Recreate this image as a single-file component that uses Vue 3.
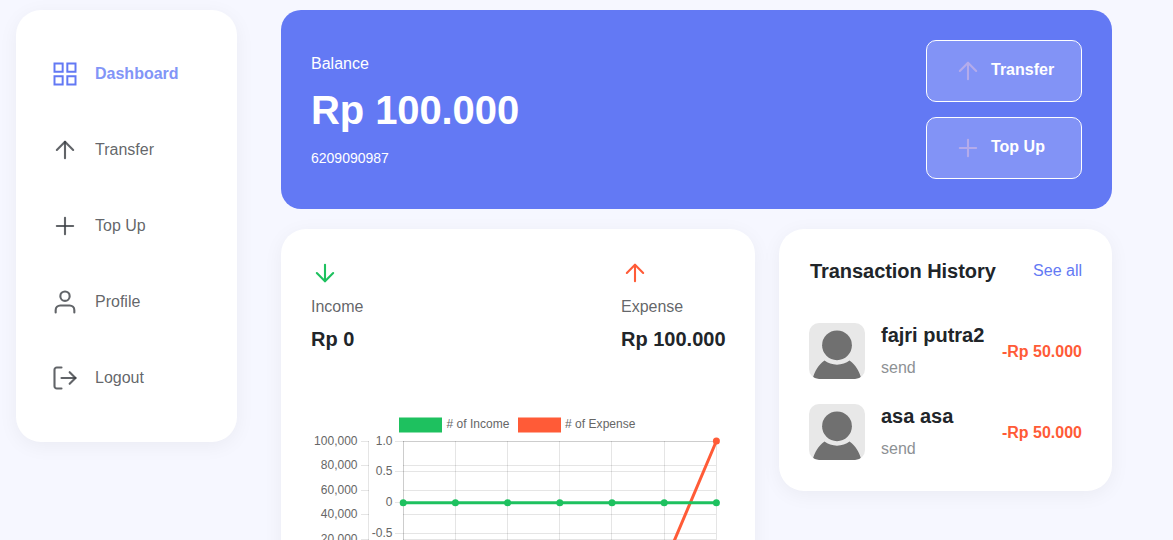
<script setup>
const icons = {
  grid: ['M3 3h7v7H3z', 'M14 3h7v7h-7z', 'M14 14h7v7h-7z', 'M3 14h7v7H3z'],
  up: ['M12 19V5', 'M5 12l7-7 7 7'],
  down: ['M12 5v14', 'M19 12l-7 7-7-7'],
  plus: ['M12 5v14', 'M5 12h14'],
  user: ['M20 21v-2a4 4 0 0 0-4-4H8a4 4 0 0 0-4 4v2', 'M12 3a4 4 0 1 0 0 8a4 4 0 1 0 0-8z'],
  logout: ['M9 21H5a2 2 0 0 1-2-2V5a2 2 0 0 1 2-2h4', 'M16 17l5-5-5-5', 'M21 12H9'],
}
const nav = [
  { label: 'Dashboard', icon: 'grid', active: true },
  { label: 'Transfer', icon: 'up' },
  { label: 'Top Up', icon: 'plus' },
  { label: 'Profile', icon: 'user' },
  { label: 'Logout', icon: 'logout' },
]
const actions = [
  { label: 'Transfer', icon: 'up' },
  { label: 'Top Up', icon: 'plus' },
]
const totals = [
  { label: 'Income', value: 'Rp 0', icon: 'down', tone: 'green' },
  { label: 'Expense', value: 'Rp 100.000', icon: 'up', tone: 'red' },
]
const history = ['fajri putra2', 'asa asa']

// Chart geometry, in the svg's own coordinates
const columns = [92.5, 144.5, 196.5, 248.5, 300.5, 353.5, 405.5]
const points = [92.2, 144.4, 196.6, 248.8, 301, 353.2, 405.4]
const outer = [
  { y: 31.5, t: '100,000' },
  { y: 55.5, t: '80,000' },
  { y: 80.5, t: '60,000' },
  { y: 104.5, t: '40,000' },
  { y: 129.5, t: '20,000' },
]
const inner = [
  { y: 31.5, t: '1.0' },
  { y: 61.5, t: '0.5' },
  { y: 92.5, t: '0' },
  { y: 123.5, t: '-0.5' },
]
</script>

<template>
  <div class="page">
    <aside class="card sidebar">
      <a v-for="n in nav" :key="n.label" class="nav" :class="{ active: n.active }">
        <svg class="icon" viewBox="0 0 24 24"><path v-for="d in icons[n.icon]" :key="d" :d="d" /></svg>
        <span>{{ n.label }}</span>
      </a>
    </aside>
    <main class="main">
      <section class="balance">
        <div class="info">
          <p class="caption">Balance</p>
          <h1>Rp 100.000</h1>
          <p class="phone">6209090987</p>
        </div>
        <div class="actions">
          <button v-for="a in actions" :key="a.label" class="action">
            <svg class="icon" viewBox="0 0 24 24"><path v-for="d in icons[a.icon]" :key="d" :d="d" /></svg>
            <span>{{ a.label }}</span>
          </button>
        </div>
      </section>
      <div class="row">
        <section class="card stats">
          <div class="totals">
            <div v-for="t in totals" :key="t.label">
              <svg class="icon" :class="t.tone" viewBox="0 0 24 24"><path v-for="d in icons[t.icon]" :key="d" :d="d" /></svg>
              <p class="label">{{ t.label }}</p>
              <p class="value">{{ t.value }}</p>
            </div>
          </div>
          <svg class="chart" width="414" height="207" viewBox="0 0 414 207">
            <rect class="key-green" x="88" y="7.5" width="43" height="15" />
            <text x="135.5" y="18" textLength="63">#&#160;of Income</text>
            <rect class="key-red" x="207" y="7.5" width="43" height="15" />
            <text x="254" y="18" textLength="70.5">#&#160;of Expense</text>
            <g class="grid">
              <path v-for="o in outer" :key="o.t" :d="`M50 ${o.y}H58M92 ${o.y}H405`" />
              <path d="M57.5 31V153" />
              <path v-for="i in inner" :key="i.t" :d="`M84 ${i.y}H405`" />
              <path v-for="c in columns" :key="c" :d="`M${c} 31V162`" />
              <path d="M92.5 31V153" />
            </g>
            <g class="ticks">
              <text v-for="o in outer" :key="o.t" x="46.5" :y="o.y + 3">{{ o.t }}</text>
              <text v-for="i in inner" :key="i.t" x="81.5" :y="i.y + 3">{{ i.t }}</text>
            </g>
            <path class="red line" d="M92.2 154.5H353.2L405.4 31" />
            <circle class="dot-red" cx="405.4" cy="31" r="3.5" />
            <path class="green line" d="M92.2 92.7H405.4" />
            <circle v-for="p in points" :key="p" class="dot-green" :cx="p" cy="92.7" r="3.5" />
          </svg>
        </section>
        <section class="card history">
          <header>
            <h2>Transaction History</h2>
            <a>See all</a>
          </header>
          <div v-for="h in history" :key="h" class="entry">
            <svg class="avatar" viewBox="0 0 56 56">
              <rect width="56" height="56" fill="#e8e8e8" />
              <circle cx="28" cy="22.3" r="14.9" />
              <path d="M3.5 56C6 48 9 42 15.5 37.5C22 43 34 43 40.5 37.5C47 42 50 48 52.5 56Z" />
            </svg>
            <div class="who">
              <strong>{{ h }}</strong>
              <span>send</span>
            </div>
            <b class="amount">-Rp 50.000</b>
          </div>
        </section>
      </div>
    </main>
  </div>
</template>

<style>
body {
  margin: 0;
  overflow: hidden;
  background: #f6f7ff;
}
</style>

<style scoped>
.page {
  display: flex;
  align-items: flex-start;
  gap: 44px;
  box-sizing: border-box;
  width: 1173px;
  height: 540px;
  padding: 10px 61px 0 16px;
  overflow: hidden;
  background: #f6f7ff;
  font: 16px/24px "Liberation Sans", Arial, sans-serif;
  color: #212529;
}
p, h1, h2 { margin: 0; }
.card {
  box-sizing: border-box;
  background: #fff;
  border-radius: 25px;
  box-shadow: 0 4px 20px rgba(0, 0, 0, 0.05);
}
.icon {
  display: block;
  flex: none;
  width: 28px;
  height: 28px;
  fill: none;
  stroke: #3a3d42;
  stroke-opacity: 0.8;
  stroke-width: 1.8;
  stroke-linecap: round;
  stroke-linejoin: round;
}
.sidebar {
  display: flex;
  flex-direction: column;
  gap: 48px;
  width: 221px;
  height: 432px;
  padding: 50px 35px;
}
.nav {
  display: flex;
  gap: 16px;
  height: 28px;
  line-height: 27px;
  color: rgba(58, 61, 66, 0.8);
}
.active { font-weight: 700; color: #8295f7; }
.active .icon { stroke: #6379f4; stroke-opacity: 1; stroke-linejoin: miter; stroke-width: 1.7; }
.main { width: 831px; }
.balance {
  display: flex;
  justify-content: space-between;
  box-sizing: border-box;
  height: 199px;
  padding: 30px;
  border-radius: 20px;
  background: #6379f4;
  color: #fff;
}
.info { padding-top: 12px; }
h1 { margin-top: 10px; font-size: 40px; line-height: 48px; letter-spacing: -0.1px; }
.phone { margin-top: 12px; font-size: 14px; }
.actions { display: flex; flex-direction: column; gap: 15px; }
.action {
  display: flex;
  align-items: center;
  gap: 9px;
  box-sizing: border-box;
  width: 156px;
  height: 62px;
  padding: 0 27px;
  border: 1px solid #fff;
  border-radius: 10px;
  background: rgba(255, 255, 255, 0.2);
  color: #fff;
  font: bold 16px/24px "Liberation Sans", Arial, sans-serif;
}
.action span { padding-bottom: 2px; }
.action .icon { stroke: #b4abeb; stroke-opacity: 1; }
.row { display: flex; align-items: flex-start; gap: 24px; margin-top: 20px; }
.stats { width: 474px; height: 430px; padding: 30px; }
.totals { display: flex; justify-content: space-between; height: 151px; }
.totals > div:last-child { width: 104px; }
.label { margin-top: 8px; color: rgba(58, 61, 66, 0.8); }
.value { margin-top: 8px; font-size: 20px; font-weight: 700; white-space: nowrap; }
.green { stroke: #1ec15f; stroke-opacity: 1; }
.red { stroke: #ff5b37; stroke-opacity: 1; }
.chart { display: block; overflow: visible; font-size: 12px; fill: #666; }
.grid { fill: none; stroke: rgba(0, 0, 0, 0.1); stroke-width: 1; }
.ticks { text-anchor: end; }
.line { fill: none; stroke-width: 3; }
.dot-green, .key-green { fill: #1ec15f; }
.dot-red, .key-red { fill: #ff5b37; }
.history { width: 333px; height: 262px; padding: 30px 30px 0; }
.history header {
  display: flex;
  justify-content: space-between;
  margin: 0 0 40px 1px;
}
h2 { font-size: 20px; line-height: 24px; letter-spacing: -0.05px; }
.history a { color: #6379f4; }
.entry { display: flex; align-items: center; height: 56px; margin-bottom: 25px; }
.avatar { width: 56px; height: 56px; border-radius: 10px; fill: #707070; }
.who { display: flex; flex: 1; flex-direction: column; gap: 9px; margin: 1px 0 0 16px; }
.who strong { font-size: 20px; white-space: nowrap; }
.who span { color: #8d9194; }
.amount { padding-top: 2px; color: #ff5b37; white-space: nowrap; }
</style>
